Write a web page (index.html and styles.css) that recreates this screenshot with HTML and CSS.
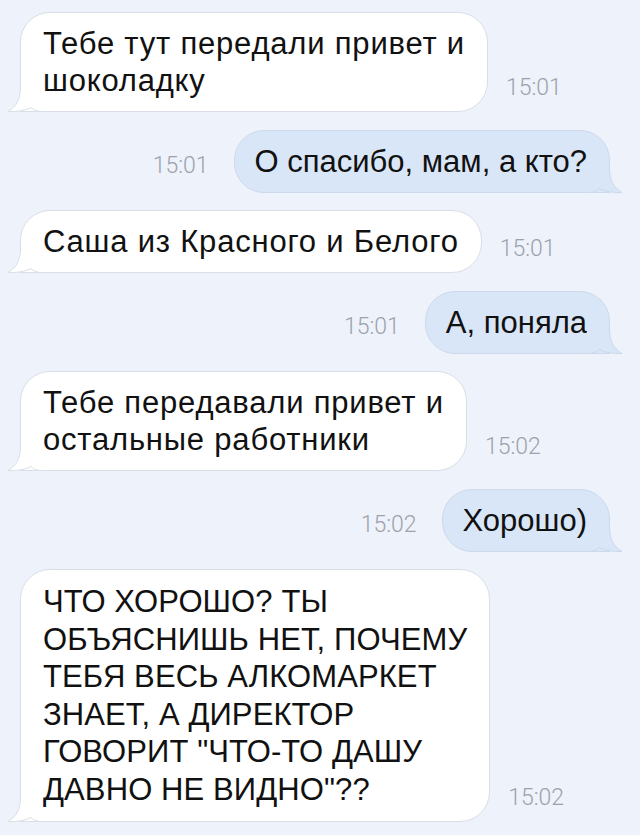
FILE: index.html
```html
<!DOCTYPE html>
<html lang="ru">
<head>
<meta charset="utf-8">
<link rel="stylesheet" href="styles.css">
</head>
<body>
<div class="chat">
  <div class="row in">
    <div class="bubble">Тебе тут передали привет и<br>шоколадку<svg class="tail" viewBox="0 0 36 26"><path class="tf" d="M13.5 0 C13.5 13 10 20 1 25.5 C10 26 18 24.5 24 21.5 C27 24.5 30 25.5 36 25.5 L36 0 Z"/><path class="ts" d="M13.5 0 C13.5 13 10 20 1 25.5 C10 26 18 24.5 24 21.5 C27 24.5 30 25.5 36 25.5"/></svg></div>
    <span class="time">15:01</span>
  </div>
  <div class="row out">
    <span class="time">15:01</span>
    <div class="bubble">О спасибо, мам, а кто?<svg class="tail" viewBox="0 0 36 26"><path class="tf" d="M13.5 0 C13.5 13 10 20 1 25.5 C10 26 18 24.5 24 21.5 C27 24.5 30 25.5 36 25.5 L36 0 Z"/><path class="ts" d="M13.5 0 C13.5 13 10 20 1 25.5 C10 26 18 24.5 24 21.5 C27 24.5 30 25.5 36 25.5"/></svg></div>
  </div>
  <div class="row in">
    <div class="bubble">Саша из Красного и Белого<svg class="tail" viewBox="0 0 36 26"><path class="tf" d="M13.5 0 C13.5 13 10 20 1 25.5 C10 26 18 24.5 24 21.5 C27 24.5 30 25.5 36 25.5 L36 0 Z"/><path class="ts" d="M13.5 0 C13.5 13 10 20 1 25.5 C10 26 18 24.5 24 21.5 C27 24.5 30 25.5 36 25.5"/></svg></div>
    <span class="time">15:01</span>
  </div>
  <div class="row out">
    <span class="time">15:01</span>
    <div class="bubble">А, поняла<svg class="tail" viewBox="0 0 36 26"><path class="tf" d="M13.5 0 C13.5 13 10 20 1 25.5 C10 26 18 24.5 24 21.5 C27 24.5 30 25.5 36 25.5 L36 0 Z"/><path class="ts" d="M13.5 0 C13.5 13 10 20 1 25.5 C10 26 18 24.5 24 21.5 C27 24.5 30 25.5 36 25.5"/></svg></div>
  </div>
  <div class="row in">
    <div class="bubble">Тебе передавали привет и<br>остальные работники<svg class="tail" viewBox="0 0 36 26"><path class="tf" d="M13.5 0 C13.5 13 10 20 1 25.5 C10 26 18 24.5 24 21.5 C27 24.5 30 25.5 36 25.5 L36 0 Z"/><path class="ts" d="M13.5 0 C13.5 13 10 20 1 25.5 C10 26 18 24.5 24 21.5 C27 24.5 30 25.5 36 25.5"/></svg></div>
    <span class="time">15:02</span>
  </div>
  <div class="row out">
    <span class="time">15:02</span>
    <div class="bubble">Хорошо)<svg class="tail" viewBox="0 0 36 26"><path class="tf" d="M13.5 0 C13.5 13 10 20 1 25.5 C10 26 18 24.5 24 21.5 C27 24.5 30 25.5 36 25.5 L36 0 Z"/><path class="ts" d="M13.5 0 C13.5 13 10 20 1 25.5 C10 26 18 24.5 24 21.5 C27 24.5 30 25.5 36 25.5"/></svg></div>
  </div>
  <div class="row in">
    <div class="bubble caps">ЧТО ХОРОШО? ТЫ<br>ОБЪЯСНИШЬ НЕТ, ПОЧЕМУ<br>ТЕБЯ ВЕСЬ АЛКОМАРКЕТ<br>ЗНАЕТ, А ДИРЕКТОР<br>ГОВОРИТ "ЧТО-ТО ДАШУ<br>ДАВНО НЕ ВИДНО"??<svg class="tail" viewBox="0 0 36 26"><path class="tf" d="M13.5 0 C13.5 13 10 20 1 25.5 C10 26 18 24.5 24 21.5 C27 24.5 30 25.5 36 25.5 L36 0 Z"/><path class="ts" d="M13.5 0 C13.5 13 10 20 1 25.5 C10 26 18 24.5 24 21.5 C27 24.5 30 25.5 36 25.5"/></svg></div>
    <span class="time">15:02</span>
  </div>
</div>
</body>
</html>
```

FILE: styles.css
```css
html, body {
  margin: 0;
  padding: 0;
  background: #eef2fa;
}
body {
  width: 640px;
  height: 835px;
  overflow: hidden;
  font-family: "Liberation Sans", Arial, sans-serif;
}
.chat {
  display: flex;
  flex-direction: column;
  gap: 17.5px;
  padding: 12px 30px 0 20px;
}
.row {
  display: flex;
  align-items: flex-end;
}
.row.out {
  justify-content: flex-end;
}
.bubble {
  position: relative;
  font-size: 31px;
  letter-spacing: 0.8px;
  line-height: 37px;
  color: #111;
  padding: 12px 22px;
  border-radius: 30px;
  white-space: nowrap;
}
.bubble.caps {
  letter-spacing: 0.1px;
  line-height: 37.5px;
  padding: 13px 22px;
}
.in .bubble {
  background: #ffffff;
  border: 1px solid #d9dee7;
  border-bottom-left-radius: 0;
}
.out .bubble {
  background: #d9e6f7;
  border: 1px solid #cdd9ea;
  border-bottom-right-radius: 0;
  letter-spacing: 0;
  padding-left: 20px;
}
.tail {
  position: absolute;
  bottom: -1px;
  width: 36px;
  height: 26px;
}
.in .tail {
  left: -14px;
}
.out .tail {
  right: -14px;
  transform: scaleX(-1);
}
.tail .ts {
  fill: none;
  stroke-width: 1;
}
.in .tail .tf { fill: #ffffff; }
.in .tail .ts { stroke: #d9dee7; }
.out .tail .tf { fill: #d9e6f7; }
.out .tail .ts { stroke: #cdd9ea; }
.time {
  font-family: Roboto, "Liberation Sans", sans-serif;
  font-size: 23px;
  line-height: 26px;
  font-weight: 300;
  color: #9ba2ad;
}
.in .time {
  margin-left: 18px;
  padding-bottom: 11px;
}
.out .time {
  margin-right: 25px;
  padding-bottom: 14px;
}
```
